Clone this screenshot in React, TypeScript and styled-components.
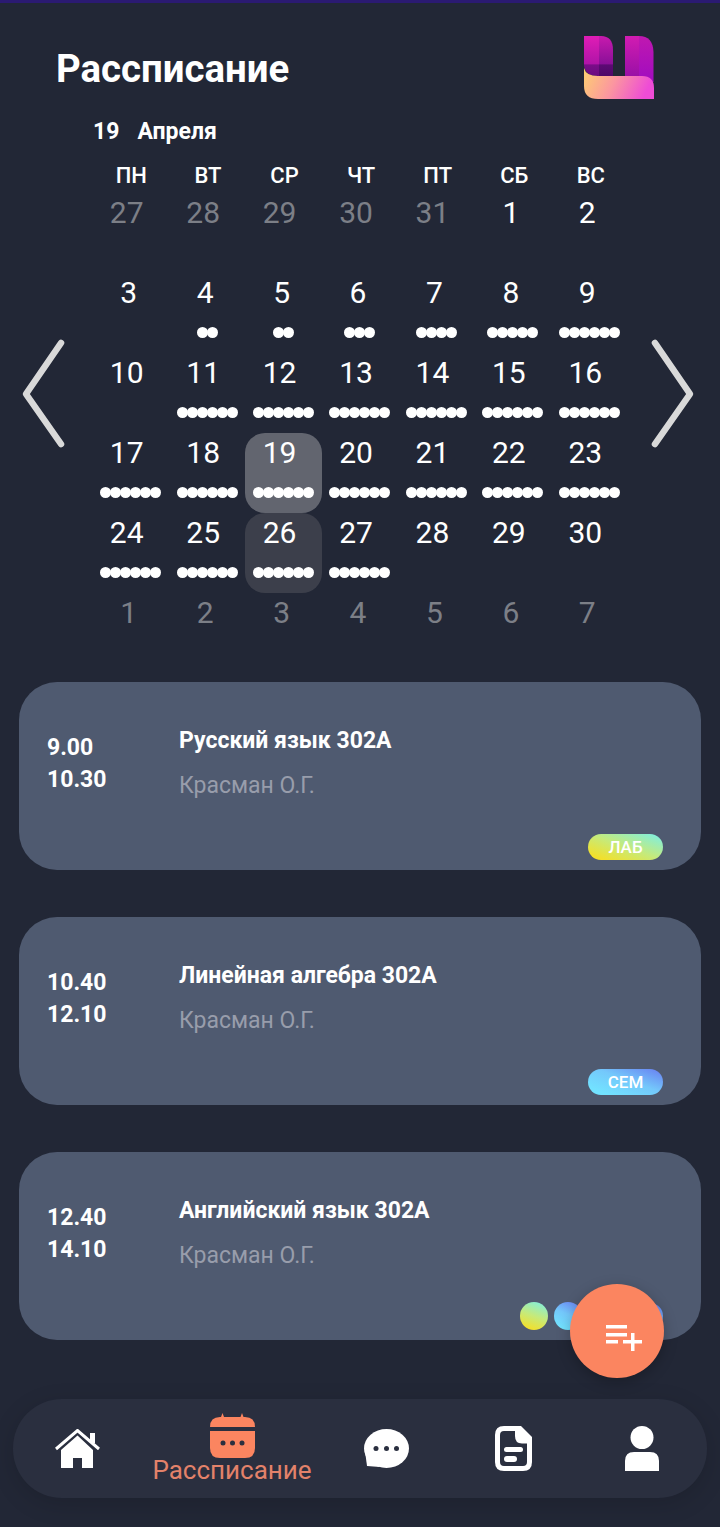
import React from 'react'
import styled, { createGlobalStyle } from 'styled-components'

type Tone = 'lab' | 'sem' | 'lec'

interface Lesson {
    start: string
    end: string
    title: string
    teacher: string
    tone: Tone
    label?: string
    dots?: Tone[]
}

interface Day {
    day: number
    muted?: boolean
    dots?: number
    active?: 'today' | 'next'
}

const WEEK = ['ПН', 'ВТ', 'СР', 'ЧТ', 'ПТ', 'СБ', 'ВС']

const GRADIENTS: Record<Tone, string> = {
    lab: 'linear-gradient(20deg, #f2e02c 12%, #c6ea7a 50%, #86eed6 92%)',
    sem: 'linear-gradient(20deg, #72e2ff 15%, #74c8fb 55%, #6a86f2 95%)',
    lec: 'linear-gradient(20deg, #72e2ff 15%, #74c8fb 55%, #6a86f2 95%)',
}

const makeDays = (): Day[] => {
    const days: Day[] = [27, 28, 29, 30, 31].map(day => ({ day, muted: true }))
    days.push({ day: 1 }, { day: 2 }, { day: 3 })
    const counts = [2, 2, 3, 4, 5, 6, 0]
    counts.forEach((dots, i) => days.push({ day: i + 4, dots }))
    for (let day = 11; day <= 30; day++) {
        days.push({
            day,
            dots: day <= 27 ? 6 : 0,
            active: day === 19 ? 'today' : day === 26 ? 'next' : undefined,
        })
    }
    for (let day = 1; day <= 7; day++) days.push({ day, muted: true })
    return days
}

const LESSONS: Lesson[] = [
    { start: '9.00', end: '10.30', title: 'Русский язык 302А', teacher: 'Красман О.Г.', tone: 'lab', label: 'ЛАБ' },
    { start: '10.40', end: '12.10', title: 'Линейная алгебра 302А', teacher: 'Красман О.Г.', tone: 'sem', label: 'СЕМ' },
    { start: '12.40', end: '14.10', title: 'Английский язык 302А', teacher: 'Красман О.Г.', tone: 'lec', dots: ['lab', 'sem'] },
]

const GlobalStyle = createGlobalStyle`
    html, body {
        margin: 0;
        padding: 0;
        background: #222736;
        overflow: hidden;
    }
    * {
        box-sizing: border-box;
    }
`

const Page = styled.div`
    position: relative;
    width: 720px;
    height: 1527px;
    overflow: hidden;
    background: #222736;
    color: #fff;
    font-family: Roboto, 'Liberation Sans', sans-serif;
`

const TopLine = styled.div`
    height: 3px;
    background: #2b1a72;
`

const Header = styled.header`
    display: flex;
    align-items: center;
    justify-content: space-between;
    padding: 33px 66px 0 56px;
`

const Title = styled.h1`
    margin: 3px 0 0;
    font-size: 38.4px;
    line-height: 44px;
    font-weight: 700;
`

const DateLine = styled.div`
    display: flex;
    gap: 18px;
    margin-top: 20px;
    padding-left: 93px;
    font-size: 23px;
    line-height: 26px;
    font-weight: 700;
`

const WeekRow = styled.div`
    display: grid;
    grid-template-columns: repeat(7, 76.6px);
    margin-top: 18px;
    padding-left: 93px;
`

const WeekDay = styled.div`
    text-align: center;
    font-size: 22px;
    line-height: 26px;
    font-weight: 500;
`

const CalendarRow = styled.div`
    display: grid;
    grid-template-columns: 92.5px 535px 92.5px;
    margin-top: 4px;
`

const Arrow = styled.svg<{ $right?: boolean }>`
    display: block;
    width: 50px;
    height: 114px;
    margin-top: 144px;
    justify-self: ${p => (p.$right ? 'end' : 'start')};
    margin-left: ${p => (p.$right ? '0' : '20px')};
    margin-right: ${p => (p.$right ? '24px' : '0')};
`

const Days = styled.div`
    display: grid;
    grid-template-columns: repeat(7, 1fr);
    grid-auto-rows: 80px;
`

const Cell = styled.div<{ $active?: 'today' | 'next' }>`
    display: flex;
    flex-direction: column;
    align-items: center;
    border-radius: 20px;
    background: ${p => (p.$active === 'today' ? '#62656f' : p.$active === 'next' ? '#3c3f4b' : 'transparent')};
`

const Num = styled.div<{ $muted?: boolean; $wide: boolean }>`
    height: 40px;
    font-size: 30px;
    line-height: 40px;
    padding-right: ${p => (p.$wide ? '8px' : '4px')};
    color: ${p => (p.$muted ? '#7c7f87' : '#fff')};
`

const DotRow = styled.div`
    display: flex;
    margin-top: 14px;
`

const Dot = styled.span`
    display: block;
    width: 11px;
    height: 11px;
    border-radius: 50%;
    background: #fff;
    & + & {
        margin-left: -1px;
    }
`

const Lessons = styled.main`
    display: flex;
    flex-direction: column;
    gap: 47px;
    margin-top: 9px;
    padding: 0 19px;
`

const Card = styled.article`
    display: flex;
    flex-direction: column;
    height: 188px;
    padding: 45px 38px 10px 28px;
    border-radius: 38px;
    background: #4f5a70;
`

const CardBody = styled.div`
    display: grid;
    grid-template-columns: 132px 1fr;
`

const Time = styled.div`
    margin-top: 5px;
    font-size: 23px;
    line-height: 32px;
    font-weight: 700;
`

const Subject = styled.div`
    font-size: 23px;
    line-height: 28px;
    font-weight: 700;
`

const Teacher = styled.div`
    margin-top: 16px;
    font-size: 23px;
    line-height: 30px;
    color: #989dab;
`

const Tags = styled.div`
    display: flex;
    align-items: center;
    justify-content: flex-end;
    gap: 6px;
    margin-top: auto;
`

const Badge = styled.div<{ $tone: Tone }>`
    width: 75px;
    height: 26px;
    border-radius: 13px;
    background: ${p => GRADIENTS[p.$tone]};
    text-align: center;
    font-size: 17px;
    line-height: 27px;
    font-weight: 500;
    color: #fff;
`

const TagDot = styled.div<{ $tone: Tone }>`
    width: 28px;
    height: 28px;
    border-radius: 50%;
    background: ${p => GRADIENTS[p.$tone]};
`

const Fab = styled.button`
    position: absolute;
    left: 570px;
    top: 1284px;
    display: flex;
    align-items: center;
    justify-content: center;
    width: 94px;
    height: 94px;
    padding: 14px 0 0 14px;
    border: 0;
    border-radius: 50%;
    background: #fb8560;
    box-shadow: 0 4px 14px rgba(0, 0, 0, 0.25);
`

const Nav = styled.nav`
    display: grid;
    grid-template-columns: 128px 182px 127px 127px 130px;
    align-items: center;
    height: 99px;
    margin: 59px 13px 0;
    border-radius: 49px;
    background: #2a2f3f;
    box-shadow: 0 6px 24px rgba(0, 0, 0, 0.14);
`

const NavItem = styled.div`
    display: flex;
    flex-direction: column;
    align-items: center;
`

const NavLabel = styled.span`
    margin-top: -3px;
    font-size: 26px;
    line-height: 30px;
    white-space: nowrap;
    color: #e3826a;
`

const Logo = () => (
    <svg width="70" height="63" viewBox="0 0 70 63">
        <defs>
            <linearGradient id="la" x1="0" y1="0" x2="0" y2="1">
                <stop offset="0" stopColor="#e01db6" />
                <stop offset="0.7" stopColor="#b014a8" />
                <stop offset="0.72" stopColor="#7a0d88" />
                <stop offset="1" stopColor="#6a0a80" />
            </linearGradient>
            <linearGradient id="lb" x1="0" y1="0" x2="0" y2="1">
                <stop offset="0" stopColor="#c81aae" />
                <stop offset="0.7" stopColor="#8a1098" />
                <stop offset="0.72" stopColor="#5c0a74" />
                <stop offset="1" stopColor="#4e0868" />
            </linearGradient>
            <linearGradient id="lc" x1="0" y1="0" x2="0" y2="1">
                <stop offset="0" stopColor="#d21cb2" />
                <stop offset="1" stopColor="#9a10a6" />
            </linearGradient>
            <linearGradient id="ld" x1="0" y1="0" x2="0" y2="1">
                <stop offset="0" stopColor="#c018b0" />
                <stop offset="1" stopColor="#a00cc0" />
            </linearGradient>
            <linearGradient id="le" x1="0" y1="0" x2="1" y2="0.2">
                <stop offset="0" stopColor="#fdd070" />
                <stop offset="0.5" stopColor="#fb96a0" />
                <stop offset="1" stopColor="#ee4cd6" />
            </linearGradient>
        </defs>
        <path d="M0 0H15V40H14Q0 40 0 28Z" fill="url(#la)" />
        <path d="M15 0H17Q29 0 29 14V40H15Z" fill="url(#lb)" />
        <path d="M41 0H55V40H41Z" fill="url(#lc)" />
        <path d="M55 0Q69 0 69.500 16V46H55Z" fill="url(#ld)" />
        <path d="M0 32Q2 40 14 40H58Q70 40 70 52V63H14Q0 63 0 50Z" fill="url(#le)" />
    </svg>
)

const HomeIcon = () => (
    <svg width="45" height="39" viewBox="0 0 45 39" fill="#fff">
        <rect x="35" y="4" width="5" height="10" />
        <path d="M1 20L22.500 1.500L44 20" fill="none" stroke="#fff" strokeWidth="3" />
        <path d="M6 21L22.500 6.500L38 21V39H27V29H18V39H6Z" />
    </svg>
)

const CalendarIcon = () => (
    <svg width="45" height="45" viewBox="0 0 45 45" fill="#fb8560">
        <path d="M11 4L12.500 0L14 4ZM30.500 4L32 0L33.500 4Z" />
        <path d="M10 4H35Q45 4 45 14H0Q0 4 10 4Z" />
        <path d="M0 18H45V35Q45 45 35 45H10Q0 45 0 35Z" />
        <g fill="#2a2f3f">
            <circle cx="13" cy="30" r="2.500" />
            <circle cx="22.500" cy="30" r="2.500" />
            <circle cx="32" cy="30" r="2.500" />
        </g>
    </svg>
)

const ChatIcon = () => (
    <svg width="45" height="39" viewBox="0 0 45 39" fill="#fff">
        <ellipse cx="22.500" cy="19.500" rx="22.500" ry="19.500" />
        <path d="M1 22L3 37L16 38Z" />
        <g fill="#2a2f3f">
            <circle cx="12" cy="19.500" r="2.500" />
            <circle cx="22.500" cy="19.500" r="2.500" />
            <circle cx="32.500" cy="19.500" r="2.500" />
        </g>
    </svg>
)

const DocIcon = () => (
    <svg width="37" height="45" viewBox="0 0 37 45" fill="#fff">
        <path d="M9 0H26L37 11V36Q37 45 28 45H9Q0 45 0 36V9Q0 0 9 0Z" />
        <path d="M9 5H20V10Q20 17.500 27 17.500H32V36Q32 40 28 40H9Q5 40 5 36V9Q5 5 9 5Z" fill="#2a2f3f" />
        <rect x="9" y="21" width="19" height="5" rx="2.500" />
        <rect x="9" y="30" width="13" height="6" rx="3" />
    </svg>
)

const PersonIcon = () => (
    <svg width="34" height="45" viewBox="0 0 34 45" fill="#fff">
        <circle cx="17" cy="11.500" r="11.500" />
        <path d="M0 45V35Q0 26 9 26H25Q34 26 34 35V45Z" />
    </svg>
)

const App: React.FC = () => {
    const days = makeDays()

    return (
        <Page>
            <GlobalStyle />
            <TopLine />
            <Header>
                <Title>Рассписание</Title>
                <Logo />
            </Header>
            <DateLine>
                <span>19</span>
                <span>Апреля</span>
            </DateLine>
            <WeekRow>
                {WEEK.map(name => <WeekDay key={name}>{name}</WeekDay>)}
            </WeekRow>
            <CalendarRow>
                <Arrow viewBox="0 0 50 114">
                    <polyline points="41,6 6,57 41,107" fill="none" stroke="#d9d9d9" strokeWidth="6.5" strokeLinecap="round" strokeLinejoin="round" />
                </Arrow>
                <Days>
                    {days.map((d, i) => (
                        <Cell key={`day_${i}`} $active={d.active}>
                            <Num $muted={d.muted} $wide={d.day > 9}>{d.day}</Num>
                            {!!d.dots && (
                                <DotRow>
                                    {Array.from({ length: d.dots }).map((_, j) => <Dot key={j} />)}
                                </DotRow>
                            )}
                        </Cell>
                    ))}
                </Days>
                <Arrow $right viewBox="0 0 50 114">
                    <polyline points="9,6 44,57 9,107" fill="none" stroke="#d9d9d9" strokeWidth="6.5" strokeLinecap="round" strokeLinejoin="round" />
                </Arrow>
            </CalendarRow>
            <Lessons>
                {LESSONS.map(lesson => (
                    <Card key={lesson.start}>
                        <CardBody>
                            <Time>
                                <div>{lesson.start}</div>
                                <div>{lesson.end}</div>
                            </Time>
                            <div>
                                <Subject>{lesson.title}</Subject>
                                <Teacher>{lesson.teacher}</Teacher>
                            </div>
                        </CardBody>
                        <Tags>
                            {lesson.dots && lesson.dots.map(tone => <TagDot key={tone} $tone={tone} />)}
                            <Badge $tone={lesson.tone}>{lesson.label}</Badge>
                        </Tags>
                    </Card>
                ))}
            </Lessons>
            <Fab aria-label="Добавить">
                <svg width="36" height="26" viewBox="0 0 36 26" fill="#fff">
                    <rect x="0" y="0" width="21" height="3.500" />
                    <rect x="0" y="8" width="21" height="3.500" />
                    <rect x="0" y="15" width="12" height="3.500" />
                    <rect x="17" y="15" width="19" height="3.500" />
                    <rect x="25" y="8" width="3.500" height="18" />
                </svg>
            </Fab>
            <Nav>
                <NavItem><HomeIcon /></NavItem>
                <NavItem>
                    <CalendarIcon />
                    <NavLabel>Рассписание</NavLabel>
                </NavItem>
                <NavItem><ChatIcon /></NavItem>
                <NavItem><DocIcon /></NavItem>
                <NavItem><PersonIcon /></NavItem>
            </Nav>
        </Page>
    )
}

export default App
